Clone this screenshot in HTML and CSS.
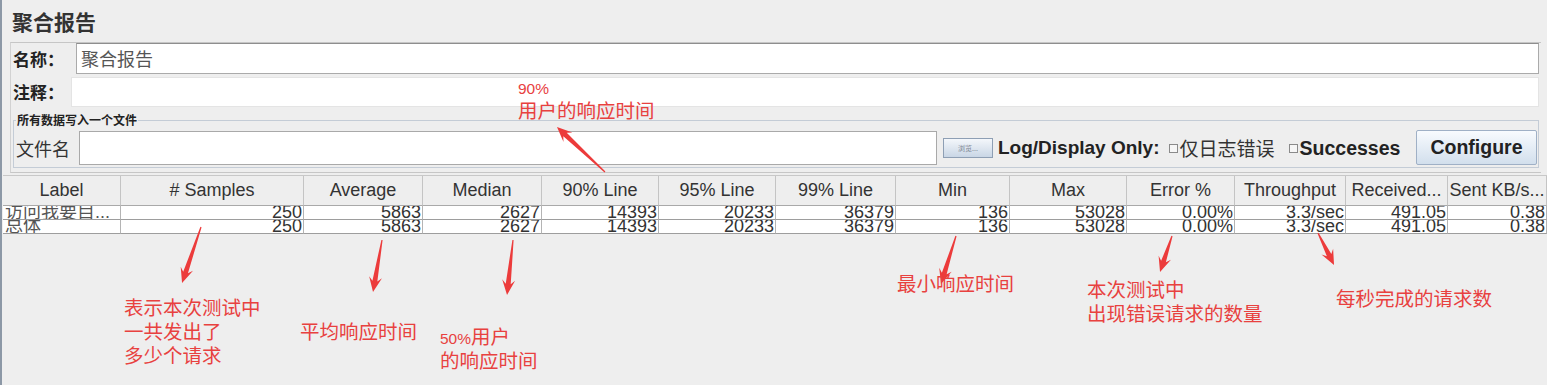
FILE: index.html
```html
<html>
<head>
    <title>聚合报告</title>
    <link rel="stylesheet" href="styles.css">
</head>
<body>
    <div class="page">
        <h1 class="title">聚合报告</h1>
        <div class="panel">
            <div class="field-row name-row">
                <label class="field-label">名称：</label>
                <div class="text-input">聚合报告</div>
            </div>
            <div class="field-row note-row">
                <label class="field-label">注释：</label>
                <div class="text-input plain"></div>
            </div>
            <fieldset class="file-box">
                <legend>所有数据写入一个文件</legend>
                <div class="file-row">
                    <span class="file-label">文件名</span>
                    <div class="file-input"></div>
                    <button class="browse">浏览...</button>
                    <span class="log-label">Log/Display Only:</span>
                    <span class="check"></span><span class="check-cjk">仅日志错误</span>
                    <span class="check second"></span><span class="check-bold">Successes</span>
                    <button class="configure">Configure</button>
                </div>
            </fieldset>
        </div>

        <div class="grid">
            <div class="grid-row head">
                <div>Label</div><div># Samples</div><div>Average</div><div>Median</div>
                <div>90% Line</div><div>95% Line</div><div>99% Line</div><div>Min</div>
                <div>Max</div><div>Error %</div><div>Throughput</div><div>Received...</div><div>Sent KB/s...</div>
            </div>
            <div class="grid-row data">
                <div class="lbl">访问我要目...</div><div>250</div><div>5863</div><div>2627</div>
                <div>14393</div><div>20233</div><div>36379</div><div>136</div>
                <div>53028</div><div>0.00%</div><div>3.3/sec</div><div>491.05</div><div>0.38</div>
            </div>
            <div class="grid-row data">
                <div class="lbl">总体</div><div>250</div><div>5863</div><div>2627</div>
                <div>14393</div><div>20233</div><div>36379</div><div>136</div>
                <div>53028</div><div>0.00%</div><div>3.3/sec</div><div>491.05</div><div>0.38</div>
            </div>
        </div>
    </div>

    <!-- red notes drawn over the screenshot -->
    <svg class="arrows" width="1547" height="385" viewBox="0 0 1547 385">
        <g fill="#ec3b3b">
            <path transform="translate(605 172) rotate(223.15)" d="M0 -0.6 L54.8 -2.5 L50.8 -6.5 L65.8 0 L50.8 6.5 L54.8 2.5 L0 0.6Z"/>
            <path transform="translate(201 227) rotate(108.7)" d="M0 -0.6 L48.1 -2.5 L44.1 -6.5 L59.1 0 L44.1 6.5 L48.1 2.5 L0 0.6Z"/>
            <path transform="translate(382 240) rotate(99.8)" d="M0 -0.6 L41.8 -2.5 L37.8 -6.5 L52.8 0 L37.8 6.5 L41.8 2.5 L0 0.6Z"/>
            <path transform="translate(513 240) rotate(96.2)" d="M0 -0.6 L44.3 -2.5 L40.3 -6.5 L55.3 0 L40.3 6.5 L44.3 2.5 L0 0.6Z"/>
            <path transform="translate(956 236) rotate(107.4)" d="M0 -0.6 L39.3 -2.5 L35.3 -6.5 L50.3 0 L35.3 6.5 L39.3 2.5 L0 0.6Z"/>
            <path transform="translate(1172 236) rotate(108.4)" d="M0 -0.6 L26.9 -2.5 L22.9 -6.5 L37.9 0 L22.9 6.5 L26.9 2.5 L0 0.6Z"/>
            <path transform="translate(1318 233) rotate(63.4)" d="M0 -0.6 L24.8 -2.5 L20.8 -6.5 L35.8 0 L20.8 6.5 L24.8 2.5 L0 0.6Z"/>
        </g>
    </svg>

    <div class="note n-p90"><span class="num">90%</span><br>用户的响应时间</div>
    <div class="note n-samples">表示本次测试中<br>一共发出了<br>多少个请求</div>
    <div class="note n-avg">平均响应时间</div>
    <div class="note n-median"><span class="num">50%</span>用户<br>的响应时间</div>
    <div class="note n-min">最小响应时间</div>
    <div class="note n-error">本次测试中<br>出现错误请求的数量</div>
    <div class="note n-tput">每秒完成的请求数</div>
</body>
</html>
```

FILE: styles.css
```css
body { margin: 0; background: #eeeeee; font-family: "Liberation Sans", "Noto Sans CJK SC", sans-serif; color: #333; position: relative; width: 1547px; height: 385px; overflow: hidden; }
.page { height: 385px; border-left: 2px solid #8c98a6; box-sizing: border-box; }

.title { margin: 0; padding: 9px 0 0 10px; height: 24px; font: bold 21px/24px "Noto Sans CJK SC", sans-serif; color: #333; }

.panel { margin: 9px 0 0 8px; width: 1530px; height: 129px; border-top: 1px solid #c6c6c6; border-left: 1px solid #d2d2d2; border-bottom: 1px solid #c6c6c6; }
.field-row { display: flex; align-items: center; }
.name-row { height: 31px; }
.note-row { height: 30px; margin-top: 3px; }
.field-label { font: bold 17px/20px "Noto Sans CJK SC", sans-serif; color: #222; padding-left: 2px; box-sizing: border-box; }
.name-row .field-label { width: 65px; }
.note-row .field-label { width: 60px; }
.text-input { flex: 1; height: 100%; margin-right: 2px; box-sizing: border-box; background: #fff; border: 1px solid #aaa; border-top-color: #8e8e8e; padding-left: 4px; font: 18px/29px "Noto Sans CJK SC", sans-serif; color: #555; }
.text-input.plain { border-color: #e4e4e4; }

.file-box { margin: 6px 2px 3px 2px; padding: 3px 2px 2px 2px; border: 1px solid #c4ccd6; height: 55px; box-sizing: border-box; }
.file-box legend { padding: 0 1px; font: bold 12px/14px "Noto Sans CJK SC", sans-serif; color: #222; }
.file-row { display: flex; align-items: center; height: 35px; }
.file-label { width: 63px; font: 18px/22px "Noto Sans CJK SC", sans-serif; color: #333; }
.file-input { width: 858px; height: 34px; box-sizing: border-box; background: #fff; border: 1px solid #a9a9a9; }
.browse { margin-left: 6px; width: 50px; height: 20px; padding: 0; border: 1px solid #8e9fb4; background: linear-gradient(#f4f7fb, #c9d6e5); font: 7px/18px "Noto Sans CJK SC", sans-serif; color: #7c8594; }
.log-label { margin-left: 5px; font: bold 19px/22px "Liberation Sans", sans-serif; color: #222; }
.check { width: 7px; height: 7px; margin: 2px 2px 0 9px; border: 1px solid #8a8a8a; background: #f6f6f6; }
.check.second { margin-left: 14px; }
.check-cjk { font: 19px/24px "Noto Sans CJK SC", sans-serif; color: #333; }
.check-bold { font: bold 19.5px/22px "Liberation Sans", sans-serif; color: #222; }
.configure { margin-left: auto; margin-right: -1px; width: 121px; height: 35px; padding: 0; border: 1px solid #9fb0c6; border-radius: 2px; background: linear-gradient(#f8fbfe, #d2dfed); font: bold 19.5px "Liberation Sans", sans-serif; color: #222; }

.grid { margin: 2px 0 0 1px; border-top: 1px solid #c8c8c8; }
.grid-row { display: grid; grid-template-columns: 118px 183px 119px 119px 117px 117px 120px 114px 117px 108px 111px 102px 99px; }
.grid-row > div { border-right: 1px solid #c4c4c4; overflow: hidden; white-space: nowrap; font-size: 18px; }
.head > div { height: 29px; line-height: 29px; border-bottom: 1px solid #a9a9a9; text-align: center; background: #eeeeee; color: #333; }
.data > div { height: 13px; line-height: 13px; border-bottom: 1px solid #9d9d9d; border-right-color: #b4b4b4; background: #fff; text-align: right; padding-right: 1px; color: #333; }
.data > div.lbl { text-align: left; padding: 0 0 0 2px; color: #555; }

.arrows { position: absolute; left: 0; top: 0; pointer-events: none; }
.note { position: absolute; color: #e8413f; font: 19.5px/24px "Noto Sans CJK SC", sans-serif; white-space: nowrap; }
.note .num { font: 15.5px "Liberation Sans", sans-serif; }
.n-p90 { left: 518px; top: 80px; }
.n-samples { left: 124px; top: 295px; }
.n-avg { left: 300px; top: 319px; }
.n-median { left: 440px; top: 324px; }
.n-min { left: 897px; top: 271px; }
.n-error { left: 1087px; top: 277px; }
.n-tput { left: 1336px; top: 286px; }
```
